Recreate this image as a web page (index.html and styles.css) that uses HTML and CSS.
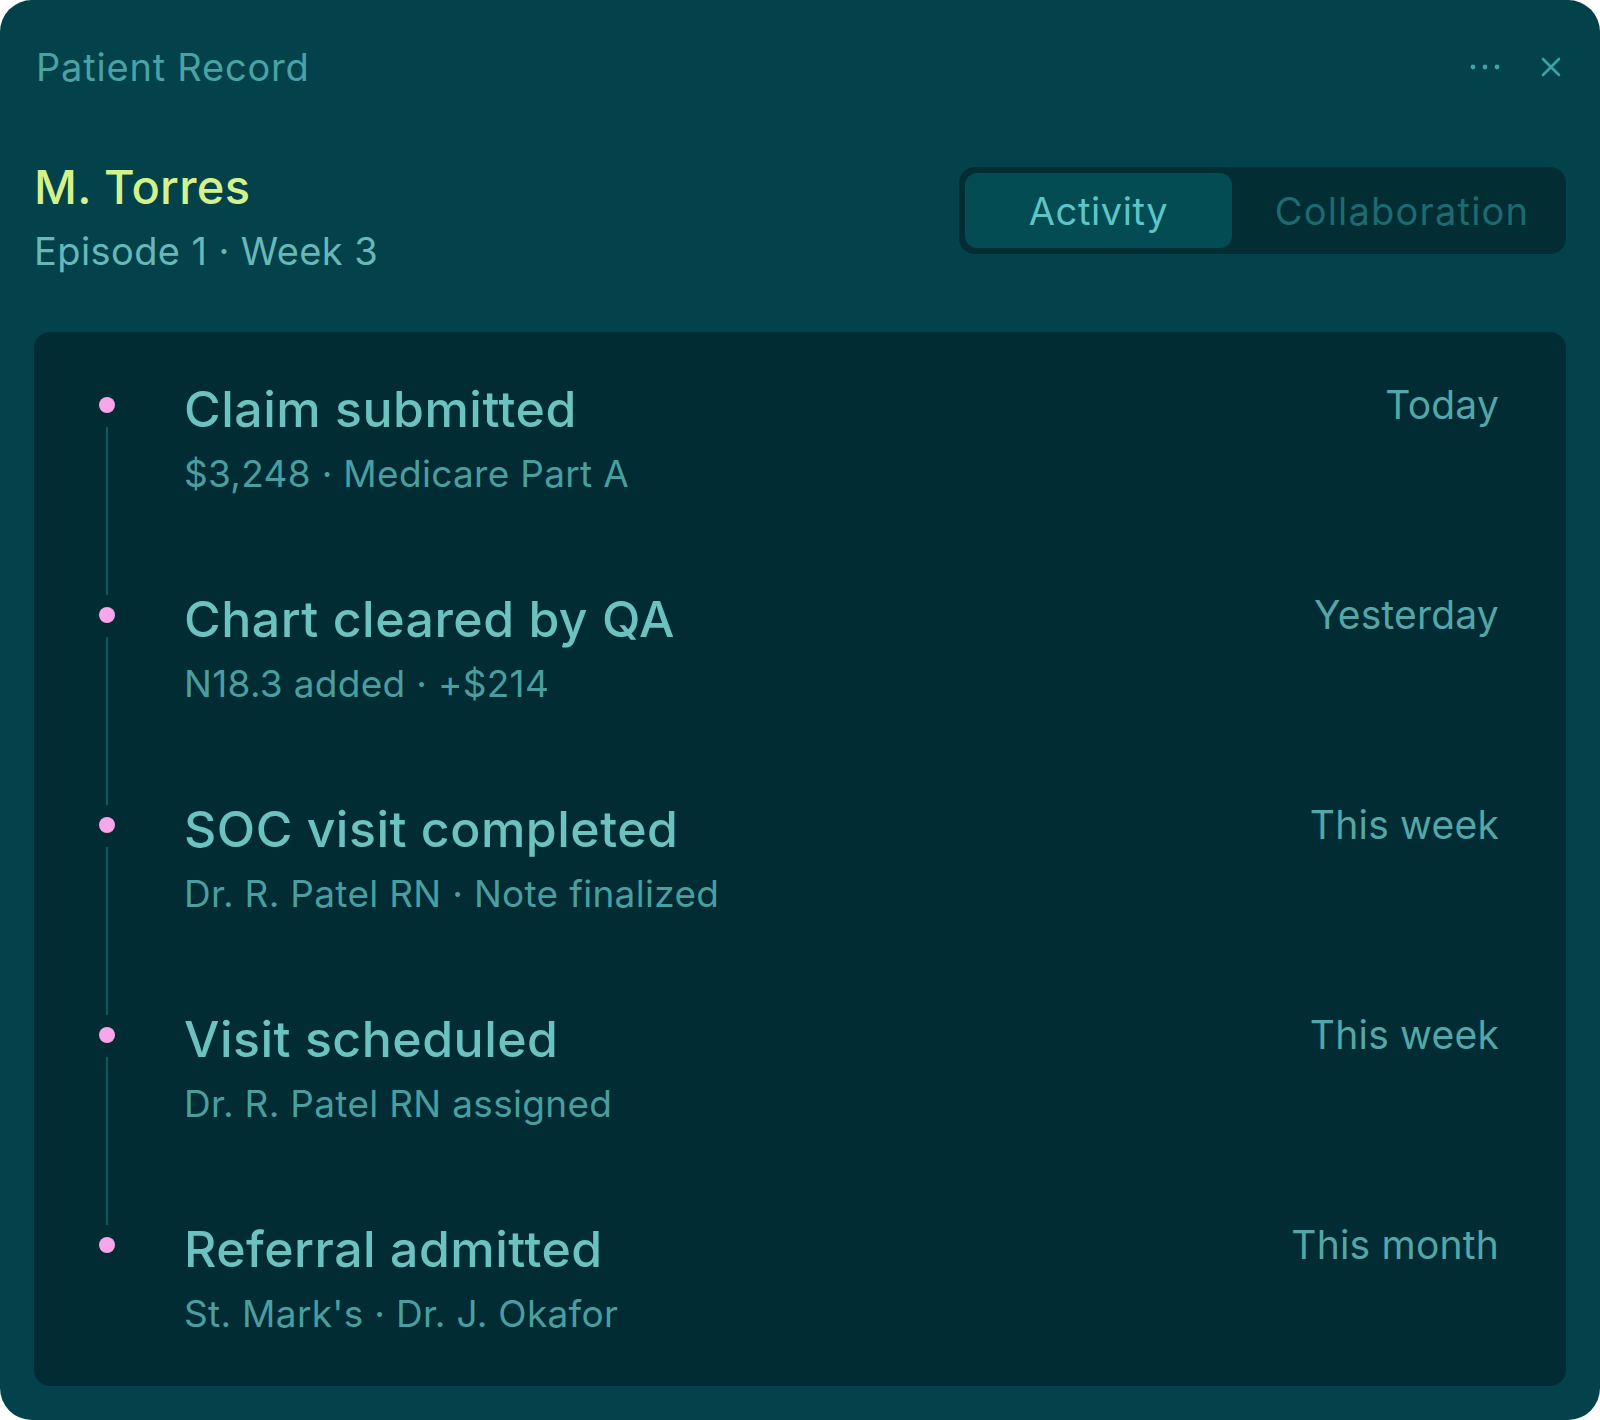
FILE: index.html
```html
<!DOCTYPE html>
<html>
<head>
  <title>Patient Record</title>
  <link rel="stylesheet" href="styles.css">
</head>
<body>
  <div class="card">
    <div class="header">
      <span class="header-title">Patient Record</span>
      <div class="header-actions">
        <button class="icon-button" aria-label="More">
          <svg width="30" height="8" viewBox="0 0 30 8"><circle cx="3" cy="4" r="2.4"/><circle cx="15" cy="4" r="2.4"/><circle cx="27" cy="4" r="2.4"/></svg>
        </button>
        <button class="icon-button" aria-label="Close">
          <svg width="20" height="20" viewBox="0 0 20 20"><path d="M2 2L18 18M18 2L2 18"/></svg>
        </button>
      </div>
    </div>

    <div class="profile">
      <div class="profile-info">
        <div class="patient-name">M. Torres</div>
        <div class="patient-episode">Episode 1 · Week 3</div>
      </div>
      <div class="tabs">
        <button class="tab active">Activity</button>
        <button class="tab">Collaboration</button>
      </div>
    </div>

    <div class="timeline">
      <div class="event">
        <div class="rail"><span class="dot"></span><span class="line"></span></div>
        <div class="event-body">
          <div class="event-title">Claim submitted</div>
          <div class="event-meta">$3,248 · Medicare Part A</div>
        </div>
        <div class="event-time">Today</div>
      </div>
      <div class="event">
        <div class="rail"><span class="dot"></span><span class="line"></span></div>
        <div class="event-body">
          <div class="event-title">Chart cleared by QA</div>
          <div class="event-meta">N18.3 added · +$214</div>
        </div>
        <div class="event-time">Yesterday</div>
      </div>
      <div class="event">
        <div class="rail"><span class="dot"></span><span class="line"></span></div>
        <div class="event-body">
          <div class="event-title">SOC visit completed</div>
          <div class="event-meta">Dr. R. Patel RN · Note finalized</div>
        </div>
        <div class="event-time">This week</div>
      </div>
      <div class="event">
        <div class="rail"><span class="dot"></span><span class="line"></span></div>
        <div class="event-body">
          <div class="event-title">Visit scheduled</div>
          <div class="event-meta">Dr. R. Patel RN assigned</div>
        </div>
        <div class="event-time">This week</div>
      </div>
      <div class="event">
        <div class="rail"><span class="dot"></span><span class="line"></span></div>
        <div class="event-body">
          <div class="event-title">Referral admitted</div>
          <div class="event-meta">St. Mark's · Dr. J. Okafor</div>
        </div>
        <div class="event-time">This month</div>
      </div>
    </div>
  </div>
</body>
</html>
```

FILE: styles.css
```css
body {
  margin: 0;
  padding: 0;
  background: #ffffff;
  font-family: 'Inter', 'Noto Sans', sans-serif;
}

.card {
  width: 1600px;
  height: 1420px;
  box-sizing: border-box;
  padding: 34px;
  background-color: #03424a;
  border-radius: 32px;
  display: flex;
  flex-direction: column;
}

.header {
  height: 66px;
  display: flex;
  justify-content: space-between;
  align-items: center;
}

.header-title {
  font-size: 38px;
  color: #4aa2a4;
  padding-left: 2px;
  letter-spacing: 0.8px;
}

.header-actions {
  display: flex;
  align-items: center;
  gap: 41px;
  padding-right: 5px;
}

.icon-button {
  background: none;
  border: none;
  padding: 0;
  display: flex;
  align-items: center;
  cursor: pointer;
}

.icon-button svg {
  fill: #3aa3a5;
  stroke: #3aa3a5;
  stroke-width: 2.6;
  stroke-linecap: round;
}

.icon-button svg circle {
  stroke: none;
}

.profile {
  margin-top: 57px;
  display: flex;
  justify-content: space-between;
  align-items: flex-start;
}

.patient-name {
  font-size: 47px;
  line-height: 60px;
  font-weight: 500;
  color: #d4f28c;
  letter-spacing: 0.3px;
}

.patient-episode {
  margin-top: 8px;
  font-size: 38px;
  line-height: 52px;
  color: #68b8ba;
  letter-spacing: 0.4px;
}

.tabs {
  margin-top: 10px;
  display: flex;
  padding: 6px;
  background-color: #012d33;
  border-radius: 16px;
}

.tab {
  width: 267px;
  height: 75px;
  border: none;
  border-radius: 12px;
  background: none;
  font-family: inherit;
  font-size: 38px;
  color: #1d6a70;
  letter-spacing: 0.6px;
  cursor: pointer;
}

.tab.active {
  background-color: #034c54;
  color: #5ec4c6;
}

.tab + .tab {
  width: 328px;
  padding-left: 18px;
  letter-spacing: 1.2px;
}

.timeline {
  margin-top: 55px;
  flex-grow: 1;
  background-color: #012c33;
  border-radius: 16px;
  padding: 45px 67px 45px 57px;
}

.event {
  display: grid;
  grid-template-columns: 32px 1fr auto;
  column-gap: 61px;
}

.rail {
  display: flex;
  flex-direction: column;
  align-items: center;
}

.dot {
  width: 16px;
  height: 16px;
  margin-top: 20px;
  border-radius: 50%;
  background-color: #f7a6ea;
}

.line {
  flex-grow: 1;
  width: 2px;
  margin-top: 14px;
  margin-bottom: -8px;
  background-color: #0c5a60;
}

.event:last-child .line {
  display: none;
}

.event-body {
  padding-bottom: 86px;
}

.event:last-child .event-body {
  padding-bottom: 0;
}

.event-title {
  font-size: 50px;
  line-height: 64px;
  font-weight: 500;
  color: #6cc2c0;
  letter-spacing: 0.5px;
}

.event-meta {
  margin-top: 6px;
  font-size: 37px;
  line-height: 54px;
  color: #4a9ea0;
  letter-spacing: 0.3px;
}

.event-time {
  font-size: 39px;
  line-height: 56px;
  color: #54a6a8;
  letter-spacing: 0.2px;
}
```
